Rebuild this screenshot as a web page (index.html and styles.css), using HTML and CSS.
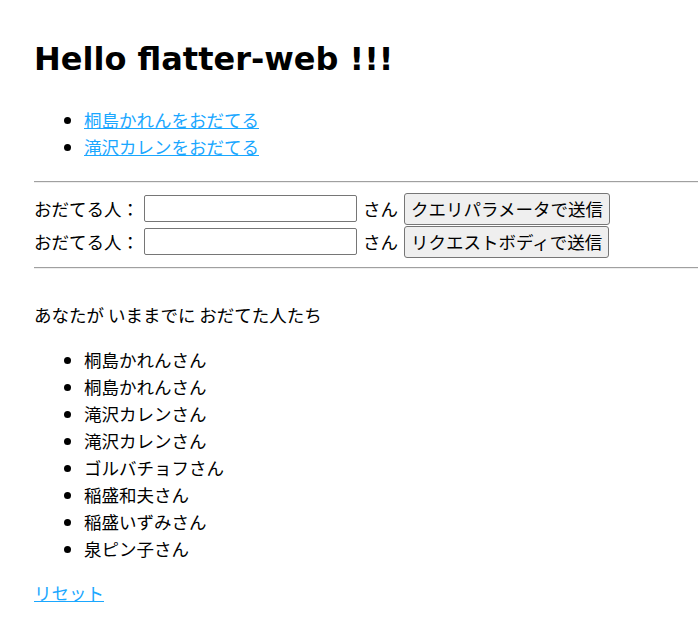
FILE: index.html
```html
<!DOCTYPE html>
<html lang="ja">
<head>
	<meta charset="UTF-8">
	<title>flatter-web</title>
	<link rel="stylesheet" href="styles.css">
</head>
<body>
<h1 class="title">Hello flatter-web !!!</h1>
<ul class="links">
    <li><a href="javascript:;">桐島かれんをおだてる</a></li>
    <li><a href="javascript:;">滝沢カレンをおだてる</a></li>
</ul>
<hr class="rule rule-top">
<form class="row" action="javascript:;">
    <label class="label" for="name-query">おだてる人：</label>
    <input class="field" id="name-query" type="text">
    <span class="suffix">さん</span>
    <button class="send" type="button">クエリパラメータで送信</button>
</form>
<form class="row" action="javascript:;">
    <label class="label" for="name-body">おだてる人：</label>
    <input class="field" id="name-body" type="text">
    <span class="suffix">さん</span>
    <button class="send" type="button">リクエストボディで送信</button>
</form>
<hr class="rule rule-bottom">
<p class="lead">あなたが いままでに おだてた人たち</p>
<ul class="people">
    <li>桐島かれんさん</li>
    <li>桐島かれんさん</li>
    <li>滝沢カレンさん</li>
    <li>滝沢カレンさん</li>
    <li>ゴルバチョフさん</li>
    <li>稲盛和夫さん</li>
    <li>稲盛いずみさん</li>
    <li>泉ピン子さん</li>
</ul>
<a class="reset" href="javascript:;">リセット</a>
</body>
</html>
```
FILE: styles.css
```css
* {
    box-sizing: border-box;
}

body {
    margin: 0;
    padding: 0 0 0 34px;
    font-family: "Noto Sans CJK JP", "DejaVu Sans", sans-serif;
    font-size: 17.5px;
    line-height: 27px;
    color: #000;
    background: #fff;
}

a {
    color: #1aa7ff;
    text-decoration: underline;
}

.title {
    margin: 39px 0 0;
    font-family: "DejaVu Sans", "Noto Sans CJK JP", sans-serif;
    font-size: 32px;
    line-height: 40px;
    font-weight: bold;
}

.links {
    margin: 27px 0 0;
    padding-left: 50px;
}

.rule {
    margin: 0;
    border: 0;
    border-top: 1px solid #a0a0a0;
    border-bottom: 1px solid #eeeeee;
}

.rule-top {
    margin-top: 21px;
    margin-bottom: 9px;
}

.rule-bottom {
    margin-top: 9px;
}

.row {
    display: flex;
    align-items: center;
    height: 33px;
    margin: 0;
}

.field {
    width: 213px;
    height: 27px;
    margin-left: 5px;
    padding: 1px 4px;
    border: 1px solid #767676;
    border-radius: 2px;
    font: inherit;
}

.suffix {
    margin: 0 6px;
}

.send {
    height: 32px;
    padding: 0 6px;
    border: 1px solid #767676;
    border-radius: 3px;
    background: #efefef;
    color: #000;
    font: inherit;
    line-height: 1;
}

.lead {
    margin: 32px 0 0;
}

.people {
    margin: 18px 0 0;
    padding-left: 50px;
}

.reset {
    display: inline-block;
    margin-top: 17px;
}
```
